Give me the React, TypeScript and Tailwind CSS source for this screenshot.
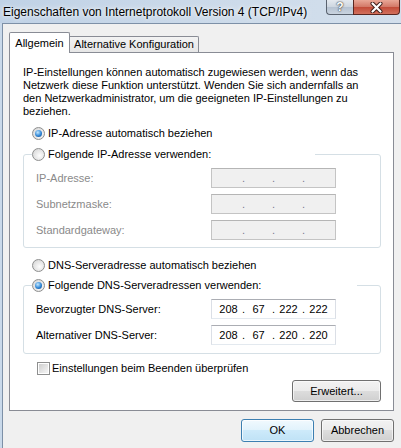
import { Fragment, type ReactNode } from "react";
import clsx from "clsx";

// Win7-style radio button: grey ring, blue orb when selected
function Radio({ checked }: { checked?: boolean }) {
  return (
    <span className="flex h-[13px] w-[13px] shrink-0 items-center justify-center rounded-full border border-[#8e8f8f] bg-[radial-gradient(circle_at_60%_60%,#fdfdfd,#e2e2e2_60%,#cfcfcf)]">
      {checked && (
        <span className="h-[7px] w-[7px] rounded-full bg-[radial-gradient(circle_at_40%_35%,#c4e9ff,#2f86d6_55%,#0d3f7b)]" />
      )}
    </span>
  );
}

function Checkbox() {
  return (
    <span className="flex h-[13px] w-[13px] shrink-0 items-center justify-center border border-[#8e8f8f] bg-white">
      <span className="h-[9px] w-[9px] bg-[linear-gradient(135deg,#cfcfcf,#f6f6f6)]" />
    </span>
  );
}

// four-part IP address box, dots between the fields
function IpField({ parts, disabled }: { parts: string[]; disabled?: boolean }) {
  return (
    <div
      className={clsx(
        "flex h-[20px] w-[125px] shrink-0 items-center border pl-[3px]",
        disabled
          ? "border-[#c4c4c4] border-t-[#b5b5b5] bg-[#f0f0f0] text-[#7a7a90]"
          : "border-[#dbdfe6] border-t-[#abadb3] border-b-[#e3e9ef] bg-white text-black"
      )}
    >
      {parts.map((p, i) => (
        <Fragment key={i}>
          {i > 0 && <span className="w-[3px] text-center">.</span>}
          <span className="w-[27px] text-center">{p}</span>
        </Fragment>
      ))}
    </div>
  );
}

function Row({ label, parts, disabled }: { label: string; parts: string[]; disabled?: boolean }) {
  return (
    <div className="flex h-[20px] items-center pl-[4px]">
      <span className={clsx("w-[175px]", disabled ? "text-[#8a8a8a]" : "text-black")}>{label}</span>
      <IpField parts={parts} disabled={disabled} />
    </div>
  );
}

function Button({ children, primary, className }: { children: ReactNode; primary?: boolean; className?: string }) {
  return (
    <button
      className={clsx(
        "flex items-center justify-center rounded-[3px] border text-[11px] text-black",
        primary
          ? "border-[#3c7fb1] bg-[linear-gradient(#f1f9fe,#e0f2fc_50%,#cdeafa_50%,#bfe2f6)] shadow-[inset_0_0_0_1px_#ffffffb0]"
          : "border-[#707070] bg-[linear-gradient(#f2f2f2,#ebebeb_50%,#dddddd_50%,#cfcfcf)] shadow-[inset_0_0_0_1px_#fcfcfcb0]",
        className
      )}
    >
      {children}
    </button>
  );
}

const blank = ["", "", "", ""];

export default function App() {
  return (
    <div className="h-[448px] w-[401px] overflow-hidden bg-[#c9d9ea] font-['Liberation_Sans',Arial,sans-serif] text-[11px] leading-[13px] text-black">
      {/* caption */}
      <div className="flex h-[23px] items-start justify-between bg-[linear-gradient(90deg,#c0d2e6,#cddbea_60%,#d3dfec)]">
        <span className="mt-[5px] pl-[3px] text-[12px] leading-[14px] [text-shadow:0_0_6px_#fff,0_0_3px_#ffffffc0]">
          Eigenschaften von Internetprotokoll Version 4 (TCP/IPv4)
        </span>
        <div className="mr-[1px] flex">
          <div className="flex h-[15px] w-[27px] items-center justify-center rounded-bl-[4px] border border-t-0 border-r-0 border-[#59626e] bg-[linear-gradient(#e4e9ef,#cdd6e0_50%,#b5c2d1_50%,#c9d3df)] text-[12px] font-bold leading-none text-white [text-shadow:0_0_1px_#333,0_0_2px_#333]">
            ?
          </div>
          <div className="flex h-[15px] w-[47px] items-center justify-center rounded-br-[4px] border border-t-0 border-[#5a2620] bg-[linear-gradient(#e9a797,#d27766_50%,#c24a38_50%,#d2705c)]">
            <svg width="13" height="11" viewBox="0 0 13 11">
              <path d="M2.5 1.5 L10.5 9.5 M10.5 1.5 L2.5 9.5" stroke="#3b1a16" strokeWidth="4" strokeLinecap="round" />
              <path d="M2.5 1.5 L10.5 9.5 M10.5 1.5 L2.5 9.5" stroke="#fff" strokeWidth="2.2" strokeLinecap="round" />
            </svg>
          </div>
        </div>
      </div>

      <div className="flex h-[425px]">
        <div className="w-[2px]" />
        <div className="flex-1 border-l border-t border-[#7d90a7] bg-[#f0f0f0] pl-[6px] pt-[8px]">
          {/* tabs */}
          <div className="flex h-[20px] items-end">
            <div className="relative z-10 -mb-px flex h-[21px] w-[61px] items-center justify-center rounded-t-[2px] border border-b-0 border-[#898c95] bg-white">
              Allgemein
            </div>
            <div className="flex h-[16px] w-[129px] items-center justify-center rounded-tr-[2px] border border-b-0 border-l-0 border-[#898c95] bg-[linear-gradient(#f3f3f3,#e6e6e6)]">
              Alternative Konfiguration
            </div>
          </div>

          <div className="flex h-[359px] w-[385px] flex-col border border-[#898c95] bg-white">
            <p className="ml-[13px] mt-[13px]">
              IP-Einstellungen können automatisch zugewiesen werden, wenn das
              <br />
              Netzwerk diese Funktion unterstützt. Wenden Sie sich andernfalls an
              <br />
              den Netzwerkadministrator, um die geeigneten IP-Einstellungen zu
              <br />
              beziehen.
            </p>

            <label className="ml-[22px] mt-[9px] flex h-[13px] items-center gap-[3px]">
              <Radio checked />
              IP-Adresse automatisch beziehen
            </label>

            <fieldset className="ml-[13px] mt-[8px] w-[358px] rounded-[3px] border border-[#d5dfe5] pb-[7px] pl-[8px] pt-[7px]">
              <legend className="w-[283px]">
                <span className="flex h-[13px] items-center gap-[3px]">
                  <Radio />
                  Folgende IP-Adresse verwenden:
                </span>
              </legend>
              <div className="flex flex-col gap-[6px]">
                <Row label="IP-Adresse:" parts={blank} disabled />
                <Row label="Subnetzmaske:" parts={blank} disabled />
                <Row label="Standardgateway:" parts={blank} disabled />
              </div>
            </fieldset>

            <label className="ml-[22px] mt-[11px] flex h-[13px] items-center gap-[3px]">
              <Radio />
              DNS-Serveradresse automatisch beziehen
            </label>

            <fieldset className="ml-[13px] mt-[7px] w-[358px] rounded-[3px] border border-[#d5dfe5] pb-[8px] pl-[8px] pt-[7px]">
              <legend className="w-[325px]">
                <span className="flex h-[13px] items-center gap-[3px]">
                  <Radio checked />
                  Folgende DNS-Serveradressen verwenden:
                </span>
              </legend>
              <div className="flex flex-col gap-[6px]">
                <Row label="Bevorzugter DNS-Server:" parts={["208", "67", "222", "222"]} />
                <Row label="Alternativer DNS-Server:" parts={["208", "67", "220", "220"]} />
              </div>
            </fieldset>

            <label className="ml-[27px] mt-[8px] flex h-[13px] items-center gap-[2px]">
              <Checkbox />
              Einstellungen beim Beenden überprüfen
            </label>

            <Button className="mr-[12px] mt-[5px] h-[22px] w-[89px] self-end">Erweitert...</Button>
          </div>

          <div className="mt-[8px] flex w-[385px] justify-end gap-[7px]">
            <Button primary className="h-[23px] w-[73px]">
              OK
            </Button>
            <Button className="h-[23px] w-[73px]">Abbrechen</Button>
          </div>
        </div>
      </div>
    </div>
  );
}
